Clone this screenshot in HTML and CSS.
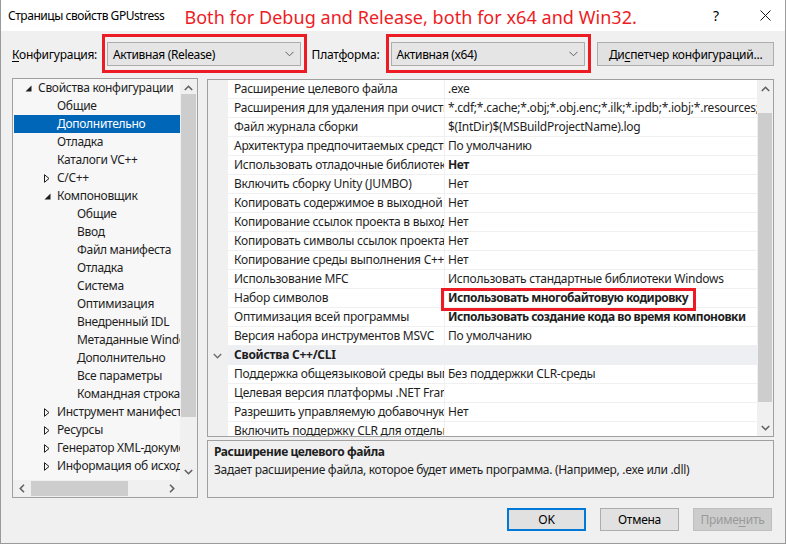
FILE: index.html
```html
<!DOCTYPE html>
<html lang="ru">
<head>
<meta charset="utf-8">
<title>Страницы свойств GPUstress</title>
<link rel="stylesheet" href="styles.css">
</head>
<body>
<div class="window">
  <div class="titlebar">
    <span class="title">Страницы свойств GPUstress</span>
    <span class="annot">Both for Debug and Release, both for x64 and Win32.</span>
    <span class="help">?</span>
    <span class="close"><svg width="11" height="11" viewBox="0 0 11 11"><path d="M0.5 0.5L10.5 10.5M10.5 0.5L0.5 10.5" stroke="#1a1a1a" stroke-width="1" fill="none"/></svg></span>
  </div>
  <div class="body">
    <div class="config-row">
      <span class="lbl lbl-conf"><u>К</u>онфигурация:</span>
      <div class="combo-wrap w1">
        <div class="combo"><span>Активная (Release)</span><svg class="dd" width="9" height="6" viewBox="0 0 9 6"><path d="M0.5 0.8L4.5 4.8L8.5 0.8" stroke="#606060" fill="none"/></svg></div>
        <div class="redbox"></div>
      </div>
      <span class="lbl lbl-plat">Плат<u>ф</u>орма:</span>
      <div class="combo-wrap w2">
        <div class="combo"><span>Активная (x64)</span><svg class="dd" width="9" height="6" viewBox="0 0 9 6"><path d="M0.5 0.8L4.5 4.8L8.5 0.8" stroke="#606060" fill="none"/></svg></div>
        <div class="redbox"></div>
      </div>
      <button class="btn btn-mgr">Ди<u>с</u>петчер конфигураций...</button>
    </div>

    <div class="main">
      <div class="tree">
        <div class="tree-list">
          <div class="tn l0"><span class="exp"><svg width="7" height="7" viewBox="0 0 7 7"><path d="M6.5 0.5V6.5H0.5Z" fill="#1e1e1e"/></svg></span>Свойства конфигурации</div>
          <div class="tn l1"><span class="exp"></span>Общие</div>
          <div class="tn l1 sel"><span class="exp"></span>Дополнительно</div>
          <div class="tn l1"><span class="exp"></span>Отладка</div>
          <div class="tn l1"><span class="exp"></span>Каталоги VC++</div>
          <div class="tn l1"><span class="exp"><svg width="6" height="9" viewBox="0 0 6 9"><path d="M0.5 0.7L5 4.5L0.5 8.3Z" fill="none" stroke="#1e1e1e"/></svg></span>C/C++</div>
          <div class="tn l1"><span class="exp"><svg width="7" height="7" viewBox="0 0 7 7"><path d="M6.5 0.5V6.5H0.5Z" fill="#1e1e1e"/></svg></span>Компоновщик</div>
          <div class="tn l2"><span class="exp"></span>Общие</div>
          <div class="tn l2"><span class="exp"></span>Ввод</div>
          <div class="tn l2"><span class="exp"></span>Файл манифеста</div>
          <div class="tn l2"><span class="exp"></span>Отладка</div>
          <div class="tn l2"><span class="exp"></span>Система</div>
          <div class="tn l2"><span class="exp"></span>Оптимизация</div>
          <div class="tn l2"><span class="exp"></span>Внедренный IDL</div>
          <div class="tn l2"><span class="exp"></span>Метаданные Windows</div>
          <div class="tn l2"><span class="exp"></span>Дополнительно</div>
          <div class="tn l2"><span class="exp"></span>Все параметры</div>
          <div class="tn l2"><span class="exp"></span>Командная строка</div>
          <div class="tn l1"><span class="exp"><svg width="6" height="9" viewBox="0 0 6 9"><path d="M0.5 0.7L5 4.5L0.5 8.3Z" fill="none" stroke="#1e1e1e"/></svg></span>Инструмент манифеста</div>
          <div class="tn l1"><span class="exp"><svg width="6" height="9" viewBox="0 0 6 9"><path d="M0.5 0.7L5 4.5L0.5 8.3Z" fill="none" stroke="#1e1e1e"/></svg></span>Ресурсы</div>
          <div class="tn l1"><span class="exp"><svg width="6" height="9" viewBox="0 0 6 9"><path d="M0.5 0.7L5 4.5L0.5 8.3Z" fill="none" stroke="#1e1e1e"/></svg></span>Генератор XML-документов</div>
          <div class="tn l1"><span class="exp"><svg width="6" height="9" viewBox="0 0 6 9"><path d="M0.5 0.7L5 4.5L0.5 8.3Z" fill="none" stroke="#1e1e1e"/></svg></span>Информация об исходном коде</div>
        </div>
        <div class="vscroll tree-v">
          <div class="arr"><svg width="9" height="6" viewBox="0 0 9 6"><path d="M0.8 5L4.5 1.3L8.2 5" stroke="#606060" stroke-width="1.6" fill="none"/></svg></div>
          <div class="track"><div class="thumb"></div></div>
          <div class="arr"><svg width="9" height="6" viewBox="0 0 9 6"><path d="M0.8 1L4.5 4.7L8.2 1" stroke="#606060" stroke-width="1.6" fill="none"/></svg></div>
        </div>
        <div class="hscroll">
          <div class="harr"><svg width="6" height="9" viewBox="0 0 6 9"><path d="M5 0.8L1.3 4.5L5 8.2" stroke="#606060" stroke-width="1.6" fill="none"/></svg></div>
          <div class="htrack"><div class="hthumb"></div></div>
          <div class="harr"><svg width="6" height="9" viewBox="0 0 6 9"><path d="M1 0.8L4.7 4.5L1 8.2" stroke="#606060" stroke-width="1.6" fill="none"/></svg></div>
        </div>
        <div class="corner"></div>
      </div>

      <div class="right">
        <div class="grid">
          <div class="rows">
            <div class="row"><div class="gut"></div><div class="nm">Расширение целевого файла</div><div class="vl">.exe</div></div>
            <div class="row"><div class="gut"></div><div class="nm">Расширения для удаления при очистке</div><div class="vl">*.cdf;*.cache;*.obj;*.obj.enc;*.ilk;*.ipdb;*.iobj;*.resources;*.tlb;*.tli;*.tlh;*.tmp;*.rsp</div></div>
            <div class="row"><div class="gut"></div><div class="nm">Файл журнала сборки</div><div class="vl">$(IntDir)$(MSBuildProjectName).log</div></div>
            <div class="row"><div class="gut"></div><div class="nm">Архитектура предпочитаемых средств сборки</div><div class="vl">По умолчанию</div></div>
            <div class="row"><div class="gut"></div><div class="nm">Использовать отладочные библиотеки</div><div class="vl b">Нет</div></div>
            <div class="row"><div class="gut"></div><div class="nm">Включить сборку Unity (JUMBO)</div><div class="vl">Нет</div></div>
            <div class="row"><div class="gut"></div><div class="nm">Копировать содержимое в выходной каталог</div><div class="vl">Нет</div></div>
            <div class="row"><div class="gut"></div><div class="nm">Копирование ссылок проекта в выходной каталог</div><div class="vl">Нет</div></div>
            <div class="row"><div class="gut"></div><div class="nm">Копировать символы ссылок проекта</div><div class="vl">Нет</div></div>
            <div class="row"><div class="gut"></div><div class="nm">Копирование среды выполнения C++ в выходной каталог</div><div class="vl">Нет</div></div>
            <div class="row"><div class="gut"></div><div class="nm">Использование MFC</div><div class="vl">Использовать стандартные библиотеки Windows</div></div>
            <div class="row"><div class="gut"></div><div class="nm">Набор символов</div><div class="vl b vis"><span class="hl">Использовать многобайтовую кодировку</span></div></div>
            <div class="row"><div class="gut"></div><div class="nm">Оптимизация всей программы</div><div class="vl b">Использовать создание кода во время компоновки</div></div>
            <div class="row"><div class="gut"></div><div class="nm">Версия набора инструментов MSVC</div><div class="vl">По умолчанию</div></div>
            <div class="row hdr"><div class="gut"><svg width="9" height="6" viewBox="0 0 9 6"><path d="M0.8 1L4.5 4.7L8.2 1" stroke="#707070" stroke-width="1.5" fill="none"/></svg></div><div class="nm">Свойства C++/CLI</div><div class="vl"></div></div>
            <div class="row"><div class="gut"></div><div class="nm">Поддержка общеязыковой среды выполнения</div><div class="vl">Без поддержки CLR-среды</div></div>
            <div class="row"><div class="gut"></div><div class="nm">Целевая версия платформы .NET Framework</div><div class="vl"></div></div>
            <div class="row"><div class="gut"></div><div class="nm">Разрешить управляемую добавочную сборку</div><div class="vl">Нет</div></div>
            <div class="row"><div class="gut"></div><div class="nm">Включить поддержку CLR для отдельных файлов</div><div class="vl"></div></div>
          </div>
          <div class="vscroll grid-v">
            <div class="arr"><svg width="9" height="6" viewBox="0 0 9 6"><path d="M0.8 5L4.5 1.3L8.2 5" stroke="#606060" stroke-width="1.6" fill="none"/></svg></div>
            <div class="track"><div class="thumb"></div></div>
            <div class="arr"><svg width="9" height="6" viewBox="0 0 9 6"><path d="M0.8 1L4.5 4.7L8.2 1" stroke="#606060" stroke-width="1.6" fill="none"/></svg></div>
          </div>
        </div>
        <div class="desc">
          <div class="desc-title">Расширение целевого файла</div>
          <div class="desc-text">Задает расширение файла, которое будет иметь программа. (Например, .exe или .dll)</div>
        </div>
      </div>
    </div>

    <div class="buttons">
      <button class="btn btn-dlg btn-ok">OK</button>
      <button class="btn btn-dlg">Отмена</button>
      <button class="btn btn-dlg btn-dis">Приме<u>н</u>ить</button>
    </div>
  </div>
</div>
</body>
</html>
```

FILE: styles.css
```css
* { box-sizing: border-box; }
html, body { margin: 0; padding: 0; }
body {
  font-family: "Noto Sans", "Open Sans", sans-serif;
  font-size: 12px;
  color: #000;
  background: #fff;
}
u { text-decoration-thickness: 1px; text-underline-offset: 2px; }

.window {
  width: 786px;
  height: 544px;
  display: flex;
  flex-direction: column;
  border-left: 1px solid #9a9a9a;
  border-right: 1px solid #9a9a9a;
  border-bottom: 1px solid #9a9a9a;
  background: #f0f0f0;
  overflow: hidden;
}

/* title bar */
.titlebar {
  height: 31px;
  flex: none;
  background: #fff;
  display: flex;
  align-items: center;
  padding-left: 7px;
}
.title { font-size: 12px; letter-spacing: -0.45px; }
.annot {
  margin-left: 20px;
  margin-top: 2px;
  color: #ed1c24;
  font-size: 18px;
  letter-spacing: 0.05px;
}
.help {
  margin-left: auto;
  font-size: 14px;
  width: 10px;
}
.close {
  margin-left: 37px;
  margin-right: 14px;
  display: flex;
}

/* body */
.body {
  flex: 1;
  display: flex;
  flex-direction: column;
  padding: 11px 11px 0 11px;
}

.config-row {
  display: flex;
  align-items: center;
  height: 24px;
  flex: none;
}
.lbl { letter-spacing: -0.25px; }
.lbl-conf { width: 95px; }
.lbl-plat { width: 79px; margin-left: 11px; }
.combo-wrap { position: relative; height: 24px; }
.combo-wrap.w1 { width: 194px; }
.combo-wrap.w2 { width: 195px; }
.combo {
  height: 24px;
  background: #e5e5e5;
  border: 1px solid #acacac;
  display: flex;
  align-items: center;
  padding-left: 5px;
  padding-right: 6px;
  letter-spacing: -0.35px;
}
.combo span { flex: 1; }
.combo .dd { flex: none; }
.redbox {
  position: absolute;
  left: -5px;
  right: -6px;
  top: -8px;
  bottom: -7px;
  border: 3px solid #ed1c24;
}

.btn {
  font-family: inherit;
  font-size: 12px;
  color: #000;
  background: #e1e1e1;
  border: 1px solid #adadad;
  padding: 0;
  height: 24px;
  letter-spacing: -0.25px;
}
.btn-mgr { width: 177px; margin-left: 12px; }

/* main */
.main {
  margin-top: 12px;
  height: 420px;
  flex: none;
  display: flex;
  gap: 9px;
}

.tree {
  width: 186px;
  flex: none;
  border: 1px solid #a0a0a0;
  background: #f7f7f7;
  display: grid;
  grid-template-columns: 1fr 17px;
  grid-template-rows: 1fr 17px;
  overflow: hidden;
}
.tree-list {
  overflow: hidden;
  padding-left: 1px;
  min-width: 0;
}
.tn {
  height: 18px;
  line-height: 18px;
  display: flex;
  align-items: center;
  white-space: nowrap;
  color: #1e1e1e;
  letter-spacing: -0.3px;
}
.tn .exp {
  width: 13px;
  flex: none;
  display: flex;
  align-items: center;
  height: 18px;
}
.tn.l0 { padding-left: 11px; }
.tn.l1 { padding-left: 30px; }
.tn.l2 { padding-left: 50px; }
.tn.sel { background: #0066b8; color: #fff; }

.vscroll {
  display: flex;
  flex-direction: column;
  background: #f0f0f0;
}
.vscroll .arr {
  height: 17px;
  flex: none;
  display: flex;
  align-items: center;
  justify-content: center;
}
.vscroll .track { flex: 1; position: relative; }
.vscroll .thumb {
  position: absolute;
  left: 1px;
  right: 1px;
  background: #cdcdcd;
}
.tree-v .thumb { top: -2px; height: 323px; }
.grid-v .thumb { top: 16px; height: 289px; }

.hscroll {
  display: flex;
  background: #f0f0f0;
}
.hscroll .harr {
  width: 17px;
  flex: none;
  display: flex;
  align-items: center;
  justify-content: center;
}
.hscroll .htrack { flex: 1; position: relative; }
.hscroll .hthumb {
  position: absolute;
  top: 1px;
  bottom: 1px;
  left: 1px;
  width: 97px;
  background: #cdcdcd;
}
.corner { background: #f0f0f0; }

/* right side */
.right {
  flex: 1;
  display: flex;
  flex-direction: column;
  gap: 3px;
  min-width: 0;
}
.grid {
  margin-top: 1px;
  height: 358px;
  flex: none;
  border: 1px solid #a0a0a0;
  display: flex;
  background: #fff;
  overflow: hidden;
}
.rows { flex: 1; overflow: hidden; min-width: 0; }
.row {
  display: flex;
  height: 19px;
}
.gut {
  width: 20px;
  flex: none;
  background: #f0f0f0;
  display: flex;
  align-items: center;
  justify-content: center;
  padding-right: 2px;
}
.nm {
  width: 217px;
  flex: none;
  padding-left: 6px;
  border-right: 1px solid #f0f0f0;
  border-bottom: 1px solid #f0f0f0;
  white-space: nowrap;
  overflow: hidden;
  line-height: 18px;
  color: #1e1e1e;
  letter-spacing: -0.25px;
}
.vl {
  flex: 1;
  min-width: 0;
  padding-left: 3px;
  border-bottom: 1px solid #f0f0f0;
  white-space: nowrap;
  overflow: hidden;
  line-height: 18px;
  color: #1e1e1e;
  letter-spacing: -0.25px;
}
.vl.b { font-weight: 700; letter-spacing: -0.5px; }
.vl.vis { overflow: visible; }
.row.hdr .nm, .row.hdr .vl { background: #eeeff2; font-weight: 700; border-color: #eeeff2; }
.hl { position: relative; display: inline-block; }
.hl::after {
  content: "";
  position: absolute;
  left: -7px;
  right: -8px;
  top: -1px;
  bottom: -4px;
  border: 3px solid #ed1c24;
}
.grid-v { width: 16px; flex: none; }

.desc {
  height: 58px;
  flex: none;
  border: 1px solid #a0a0a0;
  background: #f0f0f0;
  padding: 2px 6px 0 6px;
  color: #1e1e1e;
  letter-spacing: -0.3px;
}
.desc-title { font-weight: 700; height: 18px; line-height: 18px; letter-spacing: -0.4px; }
.desc-text { height: 18px; line-height: 18px; }

/* buttons */
.buttons {
  display: flex;
  justify-content: flex-end;
  gap: 14px;
  margin-top: 10px;
  padding-right: 2px;
}
.btn-dlg { width: 79px; height: 23px; }
.btn-ok { border: 2px solid #0078d7; }
.btn-dis { background: #cccccc; border-color: #bfbfbf; color: #9a9a9a; }
```
